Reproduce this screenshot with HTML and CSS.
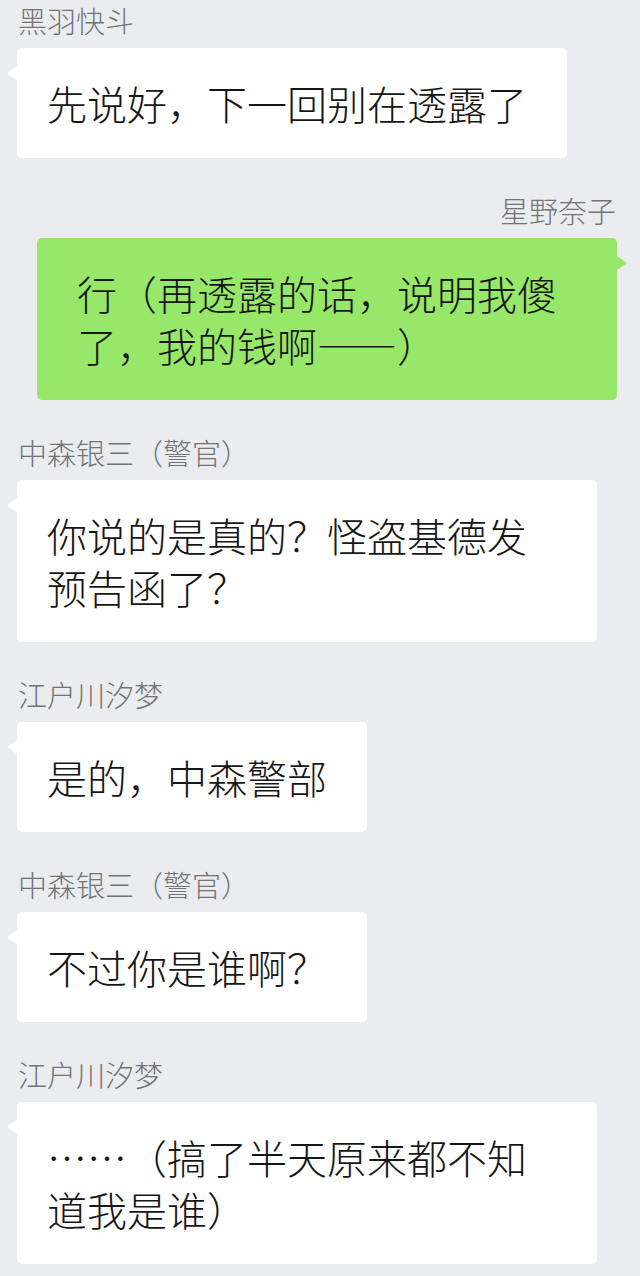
FILE: index.html
```html
<!DOCTYPE html>
<html lang="zh-CN">
<head>
<meta charset="utf-8">
<title>聊天记录</title>
<link rel="stylesheet" href="styles.css">
</head>
<body>
<div class="chat">
  <div class="msg">
    <div class="name">黑羽快斗</div>
    <div class="bubble">先说好，下一回别在透露了</div>
  </div>
  <div class="msg self">
    <div class="name">星野奈子</div>
    <div class="bubble">行（再透露的话，说明我傻了，我的钱啊——）</div>
  </div>
  <div class="msg">
    <div class="name">中森银三（警官）</div>
    <div class="bubble">你说的是真的？怪盗基德发预告函了？</div>
  </div>
  <div class="msg">
    <div class="name">江户川汐梦</div>
    <div class="bubble">是的，中森警部</div>
  </div>
  <div class="msg">
    <div class="name">中森银三（警官）</div>
    <div class="bubble">不过你是谁啊？</div>
  </div>
  <div class="msg">
    <div class="name">江户川汐梦</div>
    <div class="bubble">……（搞了半天原来都不知道我是谁）</div>
  </div>
</div>
</body>
</html>
```

FILE: styles.css
```css
html, body {
  margin: 0;
  padding: 0;
  background: #ebecf0;
}

body {
  font-family: "Noto Sans CJK SC", "Noto Sans", sans-serif;
  font-weight: 300;
  width: 640px;
  height: 1276px;
  overflow: hidden;
}

.chat {
  display: flex;
  flex-direction: column;
  gap: 34px;
  padding: 2px 23px 0 17px;
}

.msg {
  display: flex;
  flex-direction: column;
  align-items: flex-start;
  gap: 10px;
}

.msg.self {
  align-items: flex-end;
}

.name {
  font-size: 29px;
  line-height: 36px;
  color: #747474;
  padding-left: 1px;
}

.self .name {
  padding-left: 0;
  padding-right: 1px;
}

.bubble {
  position: relative;
  box-sizing: border-box;
  max-width: 580px;
  padding: 29px 40px 29px 30px;
  font-size: 40px;
  line-height: 52px;
  color: #161616;
  background: #ffffff;
  border-radius: 5px;
}

.bubble::before {
  content: "";
  position: absolute;
  top: 18px;
  left: -10px;
  width: 0;
  height: 0;
  border-top: 7px solid transparent;
  border-bottom: 7px solid transparent;
  border-right: 10px solid #ffffff;
}

.self .bubble {
  padding: 29px 30px 29px 40px;
  background: #97e769;
}

.self .bubble::before {
  left: auto;
  right: -10px;
  border-right: none;
  border-left: 10px solid #97e769;
}
```
